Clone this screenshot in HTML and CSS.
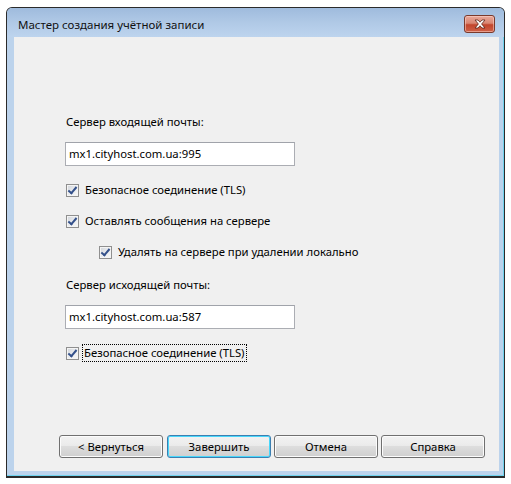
FILE: index.html
```html
<!DOCTYPE html>
<html lang="ru">
<head>
<meta charset="utf-8">
<title>Мастер создания учётной записи</title>
<link rel="stylesheet" href="styles.css">
</head>
<body>
<div class="window">
  <div class="titlebar">
    <span class="title">Мастер создания учётной записи</span>
    <span class="close">
      <svg width="16" height="10" viewBox="0 0 16 10">
        <path d="M3 1 L6 1 L8 3.2 L10 1 L13 1 L9.6 5 L13 9 L10 9 L8 6.8 L6 9 L3 9 L6.4 5 Z" fill="#fff" stroke="#5a2418" stroke-width="0.8" stroke-linejoin="round"/>
      </svg>
    </span>
  </div>
  <div class="client">
    <div class="form">
      <div class="label">Сервер входящей почты:</div>
      <div class="field">mx1.cityhost.com.ua:995</div>
      <label class="check first"><span class="box"></span><span class="text">Безопасное соединение (TLS)</span></label>
      <label class="check"><span class="box"></span><span class="text">Оставлять сообщения на сервере</span></label>
      <label class="check sub"><span class="box"></span><span class="text">Удалять на сервере при удалении локально</span></label>
      <div class="label out">Сервер исходящей почты:</div>
      <div class="field">mx1.cityhost.com.ua:587</div>
      <label class="check first"><span class="box"></span><span class="text focus">Безопасное соединение (TLS)</span></label>
    </div>
    <div class="buttons">
      <span class="btn">&lt; Вернуться</span>
      <span class="btn default">Завершить</span>
      <span class="btn">Отмена</span>
      <span class="btn">Справка</span>
    </div>
  </div>
</div>
</body>
</html>
```

FILE: styles.css
```css
html, body {
  margin: 0;
  padding: 0;
  background: #ffffff;
}

body {
  font-family: "Noto Sans", "Open Sans", sans-serif;
  font-size: 11.3px;
  color: #000;
}

.window {
  box-sizing: border-box;
  margin: 7px 0 0 6px;
  width: 499px;
  height: 471px;
  border: 1px solid #2b2b2b;
  border-bottom-width: 2px;
  border-radius: 6px 6px 0 0;
  background: #bcd3ec;
  box-shadow: inset -1px -1px 0 #6fd3ee;
  display: flex;
  flex-direction: column;
}

.titlebar {
  height: 29px;
  display: flex;
  align-items: center;
  justify-content: space-between;
  padding: 0 9px 0 11px;
  border-radius: 5px 5px 0 0;
  background: linear-gradient(to bottom, #9fbbdd 0%, #b0c9e6 50%, #bdd4ee 100%);
}

.title {
  font-size: 11.5px;
  color: #111;
  margin-top: 3px;
}

.close {
  box-sizing: border-box;
  width: 31px;
  height: 18px;
  margin-top: 3px;
  border: 1px solid #7a3a2c;
  border-radius: 3px;
  background: linear-gradient(to bottom, #e9a89a 0%, #d98672 45%, #c2452c 55%, #cf6148 100%);
  box-shadow: inset 0 0 0 1px rgba(255, 220, 210, 0.5);
  display: flex;
  align-items: center;
  justify-content: center;
}

.client {
  flex: 1;
  margin: 0 5px 5px 7px;
  background: #f0f0f0;
  display: flex;
  flex-direction: column;
  justify-content: space-between;
}

.form {
  display: flex;
  flex-direction: column;
  align-items: flex-start;
  padding: 77px 0 0 51px;
}

.label {
  line-height: 16px;
  padding-left: 1px;
}

.label.out {
  margin-top: 17px;
}

.field {
  box-sizing: border-box;
  width: 230px;
  height: 24px;
  margin-top: 12px;
  border: 1px solid #abadb3;
  border-top-color: #a0a3aa;
  background: #fff;
  padding: 0 0 0 3px;
  line-height: 22px;
}

.check {
  display: flex;
  align-items: center;
  height: 16px;
  margin-top: 15px;
}

.check.first {
  margin-top: 16px;
}

.check.sub {
  margin-left: 33px;
  margin-top: 15px;
}

.box {
  box-sizing: border-box;
  position: relative;
  width: 13px;
  height: 13px;
  margin-left: 1px;
  border: 1px solid #8f8f8f;
  background: linear-gradient(135deg, #cfd3d9 0%, #e9ebee 50%, #f8f8f8 100%);
  box-shadow: inset 0 0 0 1px #f4f4f4;
}

.box::after {
  content: "";
  position: absolute;
  left: 3px;
  top: 0px;
  width: 3px;
  height: 7px;
  border: solid #33508a;
  border-width: 0 2px 2px 0;
  transform: rotate(40deg);
}

.text {
  margin-left: 5px;
  padding: 0 1px;
  line-height: 16px;
}

.text.focus {
  outline: 1px dotted #000;
  margin-left: 4px;
}

.buttons {
  display: flex;
  gap: 3px;
  padding: 0 0 13px 45px;
}

.btn {
  box-sizing: border-box;
  width: 104px;
  height: 23px;
  border: 1px solid #707070;
  border-radius: 3px;
  background: linear-gradient(to bottom, #f2f2f2 0%, #ebebeb 45%, #dddddd 50%, #cfcfcf 100%);
  box-shadow: inset 0 0 0 1px #fcfcfc;
  display: flex;
  align-items: center;
  justify-content: center;
}

.btn.default {
  border-color: #3c7fb1;
  box-shadow: inset 0 0 0 1px #48d7fb;
  margin-left: 1px;
}
```
